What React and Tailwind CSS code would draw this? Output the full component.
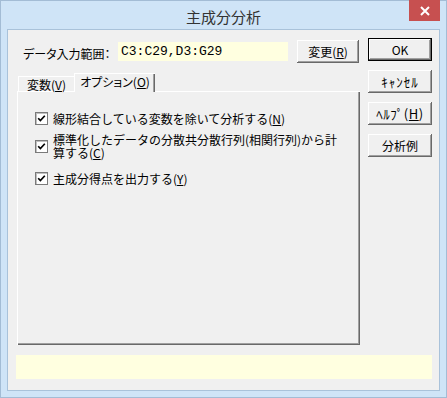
import React from "react";

const jp = "font-['Noto_Sans_CJK_JP','Noto_Sans',sans-serif]";

function Btn({ children, isDefault = false, extra = "" }) {
  if (isDefault) {
    return (
      <div className={`h-[23px] w-[64px] border border-black bg-[#f0f0f0] shadow-[inset_-1px_-1px_#696969,inset_1px_1px_#ffffff,inset_-2px_-2px_#a0a0a0] flex items-center justify-center text-[12px] text-black leading-none ${extra}`}>
        {children}
      </div>
    );
  }
  return (
    <div className={`h-[23px] w-[64px] bg-[#f0f0f0] shadow-[inset_-1px_-1px_#696969,inset_1px_1px_#ffffff,inset_-2px_-2px_#a0a0a0] flex items-center justify-center text-[12px] text-black leading-none ${extra}`}>
      {children}
    </div>
  );
}

function Check() {
  return (
    <div className="w-[13px] h-[13px] shrink-0 border border-[#7a7a7a] bg-white shadow-[inset_1px_1px_#c0c0c0] flex items-center justify-center">
      <svg width="9" height="9" viewBox="0 0 9 9">
        <path d="M1.2 4.2 L3.4 6.6 L7.8 1.8" fill="none" stroke="#000" strokeWidth="1.7" />
      </svg>
    </div>
  );
}

export default function App() {
  return (
    <div className={`w-[447px] h-[398px] bg-[#cfe4f7] border border-[#a3bcd5] flex flex-col ${jp}`}>
      {/* Title bar */}
      <div className="h-[28px] relative flex items-center justify-center">
        <span className="text-[15px] text-[#333333] leading-none mt-[3px]">主成分分析</span>
        <div className="absolute top-[-1px] right-[6px] w-[31px] h-[21px] bg-[#c75050] flex items-center justify-center">
          <svg width="10" height="10" viewBox="0 0 10 10">
            <path d="M1 1 L9 9 M9 1 L1 9" stroke="#fff" strokeWidth="2" />
          </svg>
        </div>
      </div>

      {/* Client */}
      <div className="mx-[6px] mb-[6px] flex-1 border border-[#a9c2da] bg-[#f0f0f0] flex flex-col">
        <div className="flex-1 flex">
          {/* Left column */}
          <div className="ml-[9px] w-[343px] flex flex-col pt-[10px]">
            <div className="h-[23px] flex items-center">
              <div className="ml-[6px] w-[95px] whitespace-nowrap">
                <span className="text-[12px] text-black leading-none [font-feature-settings:'palt']">データ入力範囲：</span>
              </div>
              <div className="w-[170px] h-[19px] bg-[#ffffe0] flex items-center">
                <span className="ml-[3px] text-[13px] font-['Liberation_Mono',monospace] text-black leading-none">
                  C3:C29,D3:G29
                </span>
              </div>
              <div className="ml-[9px] w-[62px]">
                <div className="h-[23px] w-[62px] bg-[#f0f0f0] shadow-[inset_-1px_-1px_#696969,inset_1px_1px_#ffffff,inset_-2px_-2px_#a0a0a0] flex items-center justify-center text-[12px] text-black leading-none">
                  変更(<span className="underline">R</span>)
                </div>
              </div>
            </div>

            {/* Tabs */}
            <div className="mt-[10px] h-[18px] flex items-end relative z-10">
              <div className="ml-[1px] w-[56px] h-[15px] border-t border-l border-white flex items-center justify-center text-[12px] text-black leading-none whitespace-nowrap">
                <span className="mt-[1px]">変数(<span className="underline">V</span>)</span>
              </div>
              <div className="w-[81px] h-[19px] mb-[-1px] bg-[#f0f0f0] border-t border-l border-white shadow-[inset_-1px_0_#696969,inset_-2px_0_#a0a0a0] flex items-center justify-center text-[12px] text-black leading-none whitespace-nowrap [font-feature-settings:'palt']">
                <span className="mb-[2px]">オプション(<span className="underline">O</span>)</span>
              </div>
            </div>

            {/* Panel */}
            <div className="flex-1 border-t border-l border-white shadow-[inset_-1px_-1px_#696969,inset_-2px_-2px_#a0a0a0] pl-[17px] pt-[20px] flex flex-col text-[12px] text-black">
              <div className="flex items-center gap-[5px] h-[13px]">
                <Check />
                <span className="leading-none whitespace-nowrap">
                  線形結合している変数を除いて分析する(<span className="underline">N</span>)
                </span>
              </div>
              <div className="flex items-start gap-[5px] mt-[8px]">
                <div className="mt-[7px]">
                  <Check />
                </div>
                <div className="flex flex-col leading-[13px] whitespace-nowrap">
                  <span>標準化したデータの分散共分散行列(相関行列)から計</span>
                  <span>
                    算する(<span className="underline">C</span>)
                  </span>
                </div>
              </div>
              <div className="flex items-center gap-[5px] h-[13px] mt-[13px]">
                <Check />
                <span className="leading-none whitespace-nowrap">
                  主成分得点を出力する(<span className="underline">Y</span>)
                </span>
              </div>
            </div>
          </div>

          {/* Right column */}
          <div className="ml-[8px] pt-[8px] flex flex-col gap-[9px]">
            <Btn isDefault>OK</Btn>
            <Btn extra="text-[13px] tracking-[1px]">ｷｬﾝｾﾙ</Btn>
            <Btn extra="text-[13px] tracking-[0.5px]">
              ﾍﾙﾌﾟ(<span className="underline">H</span>)
            </Btn>
            <Btn>分析例</Btn>
          </div>
        </div>

        {/* Status bar */}
        <div className="ml-[8px] mr-[7px] mt-[10px] mb-[11px] h-[24px] bg-[#ffffe0]" />
      </div>
    </div>
  );
}
